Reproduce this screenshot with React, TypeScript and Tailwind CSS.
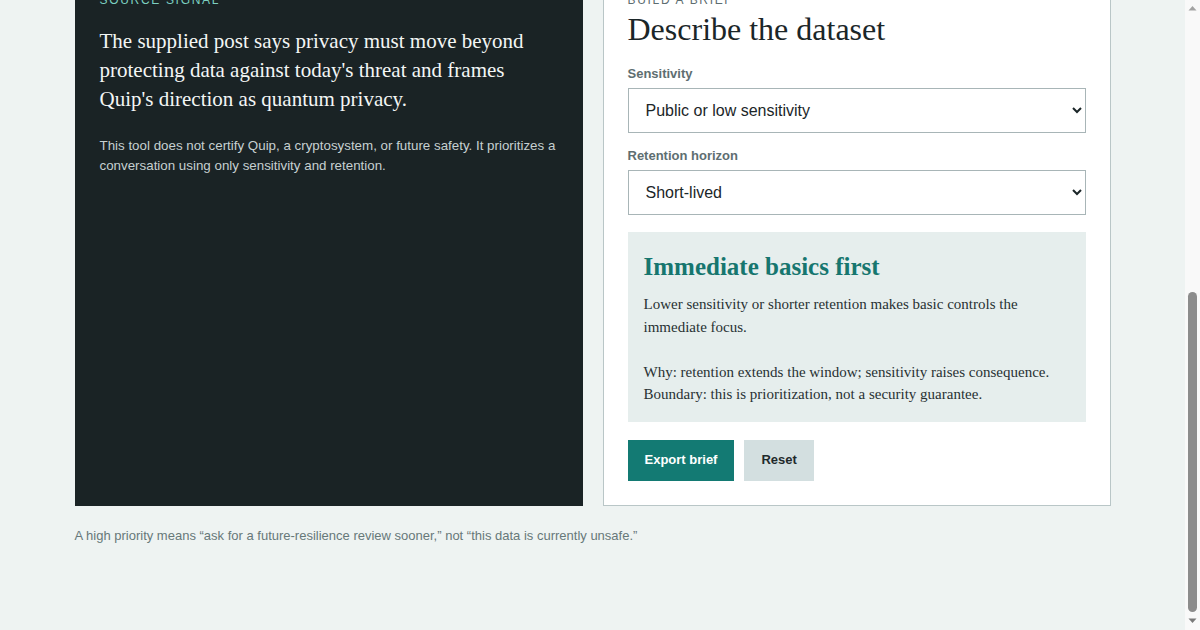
import { useEffect, useRef, useState } from "react";

const serif = { fontFamily: '"Liberation Serif", "Times New Roman", serif' };

const sensitivityOptions = ["Public or low sensitivity", "Internal", "Confidential", "Highly sensitive"];
const retentionOptions = ["Short-lived", "A few years", "A decade or more"];

function Scrollbar() {
  return (
    <aside className="flex w-[15px] shrink-0 flex-col items-center bg-[#f9f9f9]">
      <svg width="15" height="15" viewBox="0 0 15 15" className="shrink-0">
        <path d="M3.5 10.5 L7.5 6 L11.5 10.5 Z" fill="#a3a3a3" />
      </svg>
      <div className="flex flex-1 flex-col justify-end pb-[3px]">
        <div className="h-[320px] w-[9px] rounded-full bg-[#8c8c8c]" />
      </div>
      <svg width="15" height="15" viewBox="0 0 15 15" className="shrink-0">
        <path d="M3.5 3.5 L7.5 8 L11.5 3.5 Z" fill="#7a7a7a" />
      </svg>
    </aside>
  );
}

export default function App() {
  const [sensitivity, setSensitivity] = useState(sensitivityOptions[0]);
  const [retention, setRetention] = useState(retentionOptions[0]);
  const pageRef = useRef<HTMLDivElement>(null);

  // the shot is of the bottom of the page
  useEffect(() => {
    const el = pageRef.current;
    if (!el) return;
    el.scrollTop = el.scrollHeight;
    const id = requestAnimationFrame(() => (el.scrollTop = el.scrollHeight));
    return () => cancelAnimationFrame(id);
  }, []);

  return (
    <div className="flex h-screen bg-[#eef3f2] text-[#1b2628] font-['Liberation_Sans',Arial,sans-serif]">
      <div ref={pageRef} className="flex-1 overflow-y-scroll">
        <div className="mx-auto w-[1036px] pb-[84px]">
          <header className="flex h-[518px] flex-col justify-end pb-12">
            <p className="text-xs font-semibold uppercase tracking-[0.14em] text-[#137a73]">Quantum privacy</p>
            <h1 className="mt-3 text-[52px] leading-[1.05]" style={serif}>
              Future-resilience priority brief
            </h1>
            <p className="mt-5 w-[640px] text-base leading-relaxed text-[#4c5c5f]">
              Two questions about a dataset, one suggested starting point for a conversation about long-term privacy.
            </p>
          </header>

          <main className="grid grid-cols-2 gap-5">
            <section className="border border-[#1a2325] bg-[#1a2325] p-6">
              <p className="text-xs leading-4 uppercase tracking-[0.14em] text-[#7ccfc0]">Source signal</p>
              <p className="mt-[19px] text-[21px] leading-[29px] text-[#f3f6f5]" style={serif}>
                The supplied post says privacy must move beyond protecting data against today's threat and frames
                Quip's direction as quantum privacy.
              </p>
              <p className="mt-[22px] text-[13.35px] leading-5 text-[#c6d0d1]">
                This tool does not certify Quip, a cryptosystem, or future safety. It prioritizes a conversation using
                only sensitivity and retention.
              </p>
            </section>

            <section className="border border-[#b9c6c7] bg-white p-6">
              <p className="text-xs leading-4 uppercase tracking-[0.14em] text-[#5d6d70]">Build a brief</p>
              <h2 className="mt-1 text-[32px] leading-[1.1] text-[#1b2628]" style={serif}>
                Describe the dataset
              </h2>

              <label className="mt-[19px] block">
                <span className="block text-[13px] font-bold leading-4 text-[#5e6e71]">Sensitivity</span>
                <select
                  value={sensitivity}
                  onChange={(e) => setSensitivity(e.target.value)}
                  className="mt-1.5 block h-[45px] w-full border border-[#a8b5b7] bg-white px-[13px] text-base text-[#1b2628]"
                >
                  {sensitivityOptions.map((o) => (
                    <option key={o}>{o}</option>
                  ))}
                </select>
              </label>

              <label className="mt-[15px] block">
                <span className="block text-[13px] font-bold leading-4 text-[#5e6e71]">Retention horizon</span>
                <select
                  value={retention}
                  onChange={(e) => setRetention(e.target.value)}
                  className="mt-1.5 block h-[45px] w-full border border-[#a8b5b7] bg-white px-[13px] text-base text-[#1b2628]"
                >
                  {retentionOptions.map((o) => (
                    <option key={o}>{o}</option>
                  ))}
                </select>
              </label>

              <div className="mt-[17px] bg-[#e6eeed] px-4 pt-5 pb-4">
                <h3 className="text-[25px] font-bold leading-[30px] text-[#16766f]" style={serif}>
                  Immediate basics first
                </h3>
                <p className="mt-[11px] whitespace-pre-line text-[15px] leading-[22.5px] text-[#283133]" style={serif}>
                  {"Lower sensitivity or shorter retention makes basic controls the immediate focus.\n\nWhy: retention extends the window; sensitivity raises consequence.\nBoundary: this is prioritization, not a security guarantee."}
                </p>
              </div>

              <div className="mt-[18px] flex gap-2.5">
                <button className="h-[41px] bg-[#137a73] px-[17px] text-[13px] font-bold text-white">Export brief</button>
                <button className="h-[41px] bg-[#d3dfe0] px-[17px] text-[13px] font-bold text-[#1f2a2c]">Reset</button>
              </div>
            </section>
          </main>

          <p className="mt-5 text-[13px] leading-5 text-[#677879]">
            A high priority means “ask for a future-resilience review sooner,” not “this data is currently unsafe.”
          </p>
        </div>
      </div>
      <Scrollbar />
    </div>
  );
}
